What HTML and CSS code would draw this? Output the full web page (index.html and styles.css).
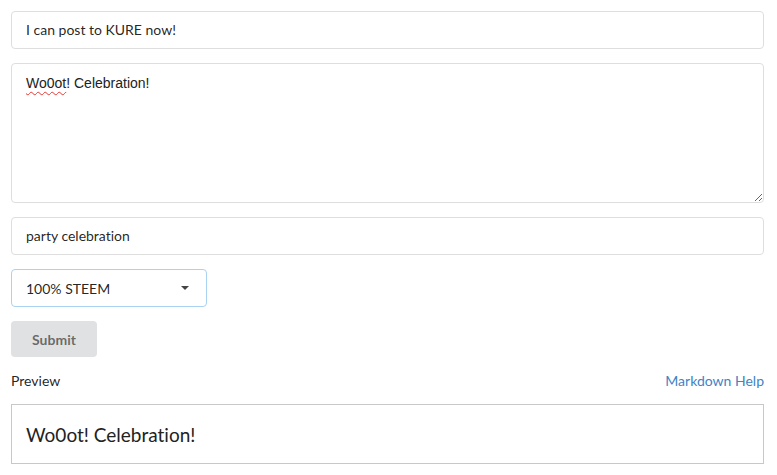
FILE: index.html
```html
<!DOCTYPE html>
<html>
<head>
<meta charset="utf-8">
<link rel="stylesheet" href="styles.css">
</head>
<body>
<form class="form">
  <div class="field"><div class="input">I can post to KURE now!</div></div>
  <div class="field"><div class="textarea"><span class="misspelled">Wo0ot</span>! Celebration!</div></div>
  <div class="field"><div class="input">party celebration</div></div>
  <div class="field">
    <div class="dropdown">
      <span>100% STEEM</span>
      <span class="caret"></span>
    </div>
  </div>
  <div class="field"><button type="button" class="button">Submit</button></div>
  <div class="preview-head">
    <span class="label">Preview</span>
    <a class="help">Markdown Help</a>
  </div>
  <div class="preview">Wo0ot! Celebration!</div>
</form>
</body>
</html>
```
FILE: styles.css
```css
html, body {
  margin: 0;
  padding: 0;
  background: #fff;
}
body {
  font-family: Lato, "Open Sans", sans-serif;
  font-size: 14px;
  color: rgba(0,0,0,0.87);
  font-variant-ligatures: none;
}
.form {
  padding: 11px 13px 0 11px;
  display: flex;
  flex-direction: column;
}
.field {
  margin-bottom: 14px;
}
.input {
  box-sizing: border-box;
  height: 38px;
  border: 1px solid #dedede;
  border-radius: 4px;
  padding: 0 14px;
  display: flex;
  align-items: center;
  line-height: 1;
}
.textarea {
  box-sizing: border-box;
  height: 140px;
  border: 1px solid #dedede;
  border-radius: 4px;
  padding: 10px 14px;
  font-family: "Liberation Sans", Arial, sans-serif;
  font-size: 14px;
  line-height: 18px;
  color: #222;
  overflow: auto;
  resize: vertical;
}
.misspelled {
  text-decoration: underline wavy #e53935;
  text-decoration-thickness: 1px;
  text-underline-offset: 3px;
}
.dropdown {
  box-sizing: border-box;
  width: 196px;
  height: 38px;
  border: 1px solid #a9d2f3;
  border-radius: 4px;
  padding: 0 17px 0 14px;
  display: flex;
  align-items: center;
  justify-content: space-between;
}
.caret {
  width: 0;
  height: 0;
  border-left: 4px solid transparent;
  border-right: 4px solid transparent;
  border-top: 4px solid #444;
}
.button {
  width: 86px;
  height: 36px;
  border: none;
  border-radius: 4px;
  background: #e0e1e2;
  color: rgba(0,0,0,0.55);
  font-family: Lato, sans-serif;
  font-weight: 700;
  font-size: 14px;
  padding: 0;
  margin-top: 0;
}
.preview-head {
  display: flex;
  justify-content: space-between;
  align-items: center;
  margin-top: -1px;
  height: 20px;
  margin-bottom: 14px;
}
.label {
  color: rgba(0,0,0,0.87);
}
.help {
  color: #4183c4;
}
.preview {
  box-sizing: border-box;
  height: 60px;
  border: 1px solid #c8c8c8;
  padding: 0 14px;
  display: flex;
  align-items: center;
  font-size: 19px;
  color: #222;
}
```
